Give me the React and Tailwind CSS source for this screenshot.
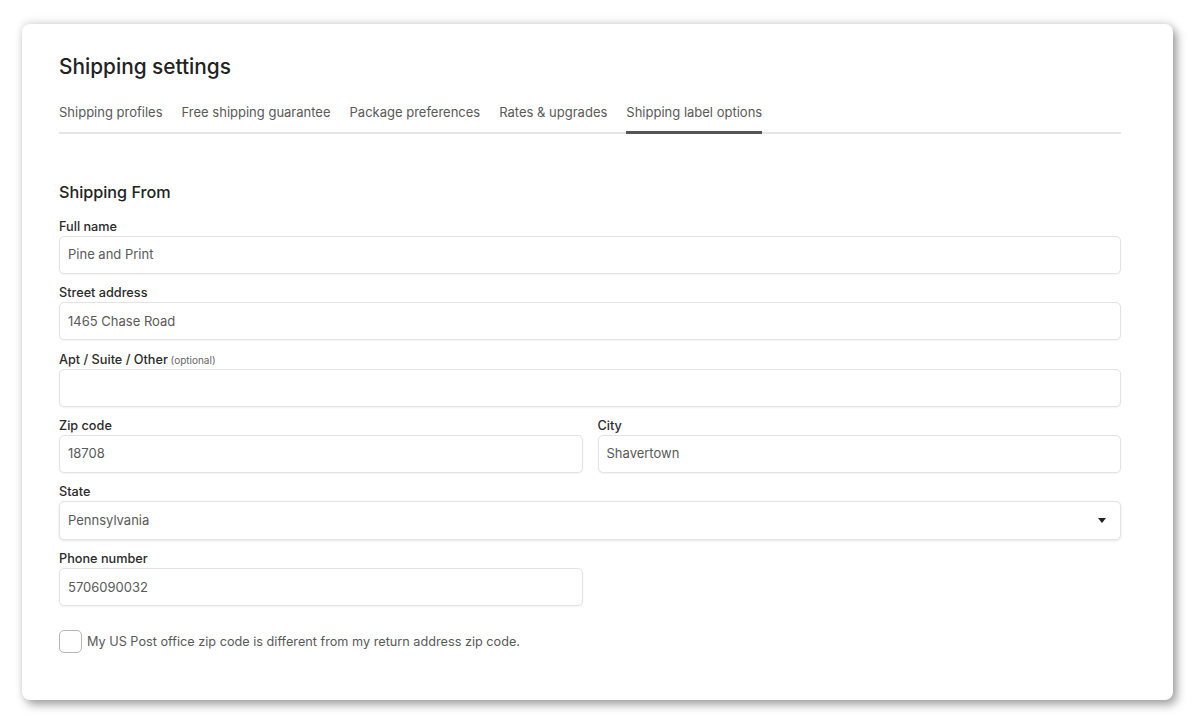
import React from "react";

const font = { fontFamily: "Inter, 'Noto Sans', sans-serif" };

function Label({ children, optional }) {
  return (
    <div className="text-[12.7px] leading-[18px] font-medium text-[#2a2a2a]">
      {children}
      {optional && <span className="text-[10px] font-normal text-[#666]"> (optional)</span>}
    </div>
  );
}

function Input({ value }) {
  return (
    <div className="h-[38px] w-full rounded-[5px] border border-[#e3e3e3] bg-white shadow-[0_1px_2px_rgba(0,0,0,0.05)] flex items-center px-[8px] text-[13px] text-[#595959]">
      {value}
    </div>
  );
}

function Field({ label, value, optional }) {
  return (
    <div className="flex flex-col">
      <Label optional={optional}>{label}</Label>
      <Input value={value} />
    </div>
  );
}

export default function App() {
  const tabs = [
    "Shipping profiles",
    "Free shipping guarantee",
    "Package preferences",
    "Rates & upgrades",
    "Shipping label options",
  ];
  return (
    <div className="w-[1200px] h-[724px] bg-white pt-[24px] pl-[22px]" style={font}>
      <div className="w-[1151px] h-[676px] bg-white rounded-[8px] shadow-[4px_5px_10px_rgba(0,0,0,0.35),0_-2px_8px_rgba(0,0,0,0.12)] pl-[37px] pr-[52px] pt-[29px]">
        <h1 className="text-[20.8px] leading-[28px] font-medium text-[#222] mb-[21px]">Shipping settings</h1>
        <div className="flex gap-[19px] border-b-2 border-[#e6e6e6]">
          {tabs.map((t, i) => (
            <div
              key={t}
              className={
                "text-[13px] leading-[20px] text-[#595959] pb-[9px] -mb-[2px] " +
                (i === 4 ? "border-b-[3px] border-[#555]" : "border-b-[3px] border-transparent")
              }
            >
              {t}
            </div>
          ))}
        </div>
        <h2 className="mt-[46px] text-[16.2px] leading-[24px] font-medium text-[#222] mb-[14px]">Shipping From</h2>
        <div className="flex flex-col gap-[10.3px]">
          <Field label="Full name" value="Pine and Print" />
          <Field label="Street address" value="1465 Chase Road" />
          <Field label="Apt / Suite / Other" optional value="" />
          <div className="grid grid-cols-2 gap-[15px]">
            <Field label="Zip code" value="18708" />
            <Field label="City" value="Shavertown" />
          </div>
          <div className="flex flex-col">
            <Label>State</Label>
            <div className="h-[39px] w-full rounded-[5px] border border-[#e3e3e3] bg-white shadow-[0_1px_3px_rgba(0,0,0,0.1)] flex items-center justify-between px-[8px] pr-[14px] text-[13px] text-[#595959]">
              <span>Pennsylvania</span>
              <svg width="8" height="5" viewBox="0 0 8 5"><path d="M0 0h8L4 5z" fill="#222" /></svg>
            </div>
          </div>
          <div className="grid grid-cols-2 gap-[15px]">
            <Field label="Phone number" value="5706090032" />
            <div />
          </div>
        </div>
        <div className="mt-[24px] flex items-center gap-[5px]">
          <div className="w-[23px] h-[23px] rounded-[5px] border border-[#b5b5b5] bg-white" />
          <span className="text-[12.7px] text-[#595959]">My US Post office zip code is different from my return address zip code.</span>
        </div>
      </div>
    </div>
  );
}
